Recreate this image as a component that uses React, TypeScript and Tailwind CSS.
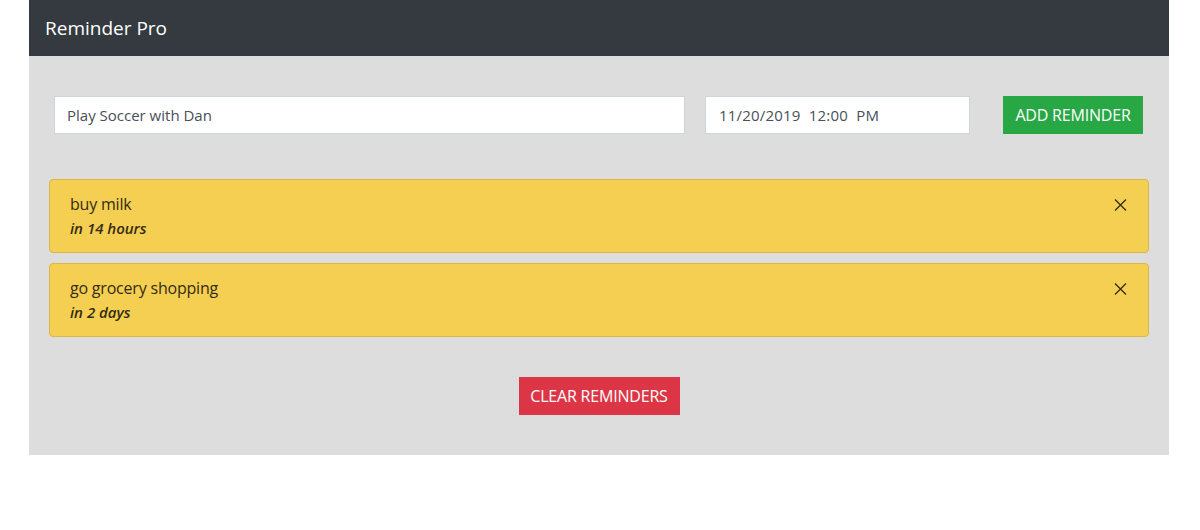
type Reminder = { id: number; text: string; due: string };

const reminders: Reminder[] = [
  { id: 1, text: "buy milk", due: "in 14 hours" },
  { id: 2, text: "go grocery shopping", due: "in 2 days" },
];

const font = { fontFamily: "'Open Sans', 'Noto Sans', sans-serif" };

const CloseIcon = () => (
  <svg width="13" height="12" viewBox="0 0 13 12" fill="none" stroke="currentColor" strokeWidth="1.3">
    <path d="M1 0.5 L12 11.5 M12 0.5 L1 11.5" />
  </svg>
);

const ReminderItem = ({ reminder }: { reminder: Reminder }) => (
  <div className="flex items-start justify-between rounded border border-[#d9b64a] bg-[#f5cf51] px-5 py-3 text-[#332c14]">
    <div className="leading-6">
      <div className="text-[16px] tracking-[-0.2px]">{reminder.text}</div>
      <div className="text-[15px] font-semibold italic">{reminder.due}</div>
    </div>
    <button aria-label="Remove reminder" className="mr-[1px] mt-[7px] text-[#332c14]">
      <CloseIcon />
    </button>
  </div>
);

export default function App() {
  return (
    <div className="min-h-[530px] bg-white" style={font}>
      <div className="ml-[29px] w-[1140px]">
        <header className="flex h-14 items-center bg-[#343a40] px-4 text-[19px] text-white">
          Reminder Pro
        </header>

        <main className="bg-[#dddddd] pb-10 pt-10">
          <div className="flex items-center pl-[25px] pr-[26px]">
            <input
              className="h-[38px] w-[631px] border border-[#ced4da] bg-white px-3 text-[15px] text-[#495057] outline-none"
              defaultValue="Play Soccer with Dan"
            />
            <div className="ml-5 flex h-[38px] w-[265px] items-center border border-[#ced4da] bg-white px-[13px] text-[15px] tracking-[0.2px] text-[#495057]">
              11/20/2019&nbsp;&nbsp;12:00&nbsp;&nbsp;PM
            </div>
            <button className="ml-auto h-[38px] w-[140px] bg-[#28a745] text-[16px] tracking-[-0.2px] text-white">
              ADD REMINDER
            </button>
          </div>

          <div className="mx-5 mt-[45px] flex flex-col gap-[10px]">
            {reminders.map((r) => (
              <ReminderItem key={r.id} reminder={r} />
            ))}
          </div>

          <div className="mt-10 flex justify-center">
            <button className="h-[38px] w-[161px] bg-[#dc3545] text-[16px] tracking-[-0.2px] text-white">
              CLEAR REMINDERS
            </button>
          </div>
        </main>
      </div>
    </div>
  );
}
